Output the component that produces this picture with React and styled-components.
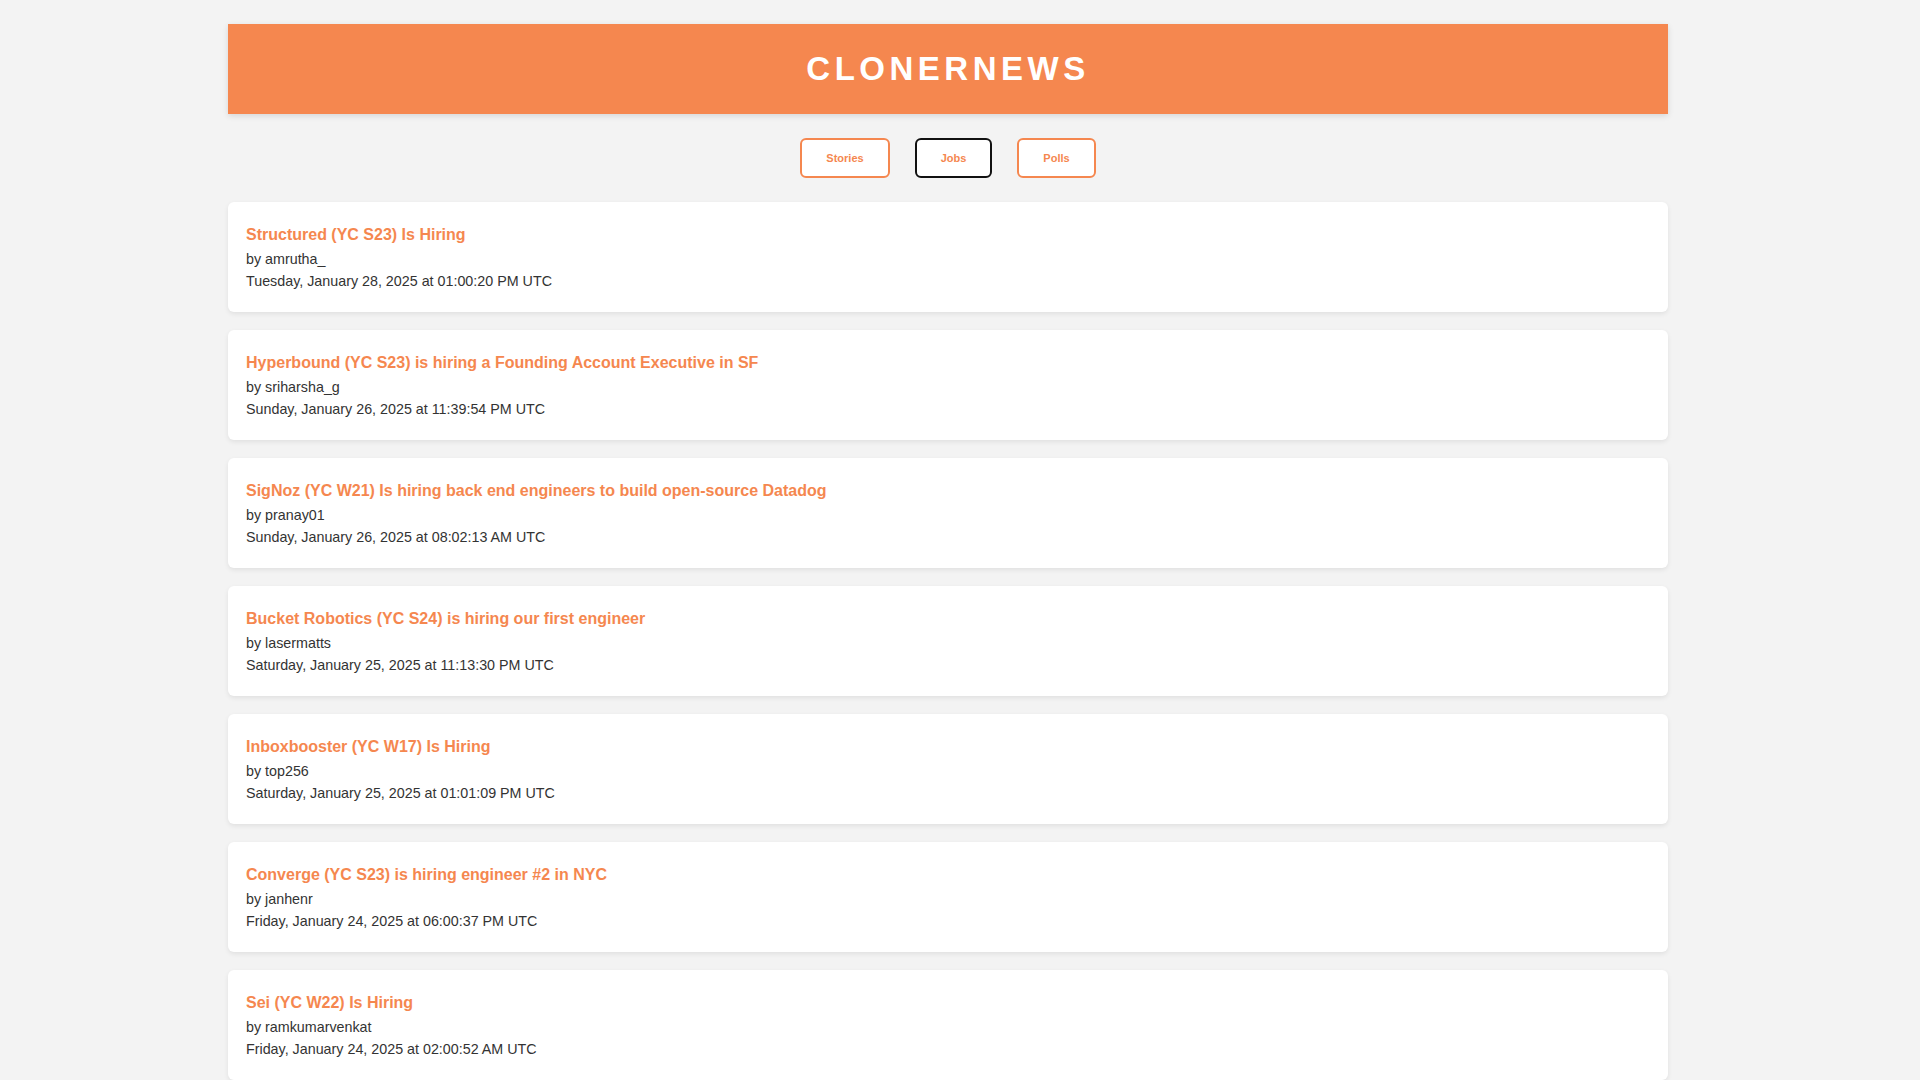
import React from "react";
import styled, { createGlobalStyle } from "styled-components";

const GlobalStyle = createGlobalStyle`
  body {
    margin: 0;
    padding-right: 24px;
    background-color: #f3f3f3;
    font-family: "Liberation Sans", Arial, sans-serif;
    color: #333;
  }
`;

const Page = styled.div`
  max-width: 1440px;
  margin: 0 auto;
  padding: 24px 0 40px;
`;

const Header = styled.header`
  height: 90px;
  background-color: #f5874f;
  display: flex;
  align-items: center;
  justify-content: center;
  box-shadow: 0 2px 6px rgba(0, 0, 0, 0.12);
  h1 {
    margin: 0;
    color: #fff;
    font-size: 33px;
    font-weight: 700;
    letter-spacing: 4.5px;
  }
`;

const Nav = styled.nav`
  display: flex;
  justify-content: center;
  gap: 25px;
  margin: 24px 0 24px;
`;

const TabButton = styled.button`
  height: 40px;
  padding: 0 24px;
  background-color: #fff;
  border: 2px solid ${(p) => (p.active ? "#111" : "#f5874f")};
  border-radius: 6px;
  color: #f5874f;
  font-family: "Liberation Sans", Arial, sans-serif;
  font-size: 11px;
  font-weight: 700;
  cursor: pointer;
`;

const List = styled.ul`
  list-style: none;
  margin: 0;
  padding: 0;
  display: flex;
  flex-direction: column;
  gap: 18px;
`;

const Card = styled.li`
  background-color: #fff;
  border-radius: 6px;
  padding: 24px 18px 20px;
  box-shadow: 0 2px 5px rgba(0, 0, 0, 0.08);
  h3 {
    margin: 0 0 4px;
    font-size: 16px;
    line-height: 18px;
    font-weight: 700;
    color: #f5874f;
  }
  p {
    margin: 0;
    font-size: 14.3px;
    line-height: 22px;
    color: #333;
  }
`;

const jobs = [
  {
    title: "Structured (YC S23) Is Hiring",
    by: "amrutha_",
    time: "Tuesday, January 28, 2025 at 01:00:20 PM UTC",
  },
  {
    title: "Hyperbound (YC S23) is hiring a Founding Account Executive in SF",
    by: "sriharsha_g",
    time: "Sunday, January 26, 2025 at 11:39:54 PM UTC",
  },
  {
    title: "SigNoz (YC W21) Is hiring back end engineers to build open-source Datadog",
    by: "pranay01",
    time: "Sunday, January 26, 2025 at 08:02:13 AM UTC",
  },
  {
    title: "Bucket Robotics (YC S24) is hiring our first engineer",
    by: "lasermatts",
    time: "Saturday, January 25, 2025 at 11:13:30 PM UTC",
  },
  {
    title: "Inboxbooster (YC W17) Is Hiring",
    by: "top256",
    time: "Saturday, January 25, 2025 at 01:01:09 PM UTC",
  },
  {
    title: "Converge (YC S23) is hiring engineer #2 in NYC",
    by: "janhenr",
    time: "Friday, January 24, 2025 at 06:00:37 PM UTC",
  },
  {
    title: "Sei (YC W22) Is Hiring",
    by: "ramkumarvenkat",
    time: "Friday, January 24, 2025 at 02:00:52 AM UTC",
  },
  {
    title: "Fintool (YC W23) Is Hiring",
    by: "nicbst",
    time: "Thursday, January 23, 2025 at 05:00:12 PM UTC",
  },
];

const App = () => {
  return (
    <>
      <GlobalStyle />
      <Page>
        <Header>
          <h1>CLONERNEWS</h1>
        </Header>
        <Nav>
          <TabButton>Stories</TabButton>
          <TabButton active>Jobs</TabButton>
          <TabButton>Polls</TabButton>
        </Nav>
        <List>
          {jobs.map((job) => (
            <Card key={job.title}>
              <h3>{job.title}</h3>
              <p>by {job.by}</p>
              <p>{job.time}</p>
            </Card>
          ))}
        </List>
      </Page>
    </>
  );
};

export default App;
